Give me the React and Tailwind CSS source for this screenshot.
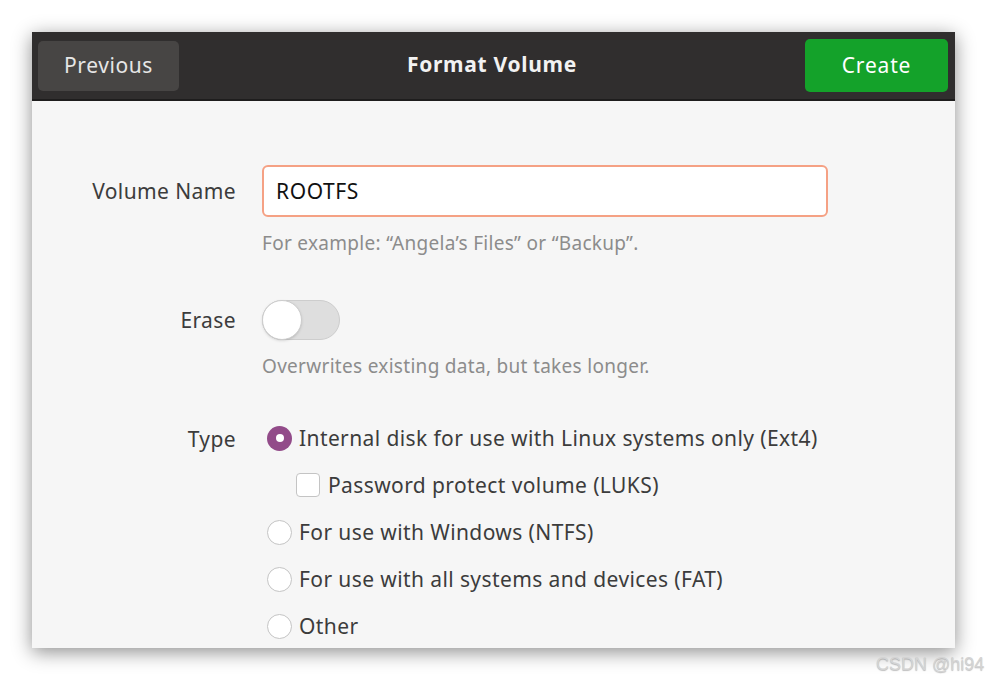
export default function App() {
  const font = { fontFamily: '"Noto Sans", "Open Sans", sans-serif' }
  return (
    <div className="relative h-[681px] w-[987px] bg-white" style={font}>
      <div className="pl-[32px] pt-[32px]">
        <div className="flex h-[616px] w-[923px] flex-col overflow-hidden bg-[#f6f6f6] shadow-[0_4px_18px_rgba(0,0,0,0.45)]">
          <header className="flex h-[69px] shrink-0 items-center justify-between border-b-2 border-[#1e1d1d] bg-[#302e2e] pl-[6px] pr-[7px]">
            <button className="h-[50px] w-[141px] rounded-[5px] bg-[#474544] text-[21px] tracking-[0.6px] text-[#e6e6e6]">Previous</button>
            <h1 className="pb-px text-[21px] font-bold tracking-[0.7px] text-[#f2f2f2]">Format Volume</h1>
            <button className="h-[53px] w-[143px] rounded-[5px] bg-[#14a22a] text-[21px] tracking-[0.8px] text-white">Create</button>
          </header>

          <div className="flex flex-col pt-[64px] text-[21px] tracking-[0.4px] text-[#3c3c3c]">
            <div className="flex items-center">
              <div className="w-[204px] pt-[2px] text-right">Volume Name</div>
              <div className="ml-[26px] flex h-[52px] w-[566px] items-center rounded-[6px] border-2 border-[#f5a184] bg-white px-[12px] pt-[2px] tracking-[0.6px] text-[#111]">ROOTFS</div>
            </div>
            <div className="ml-[230px] mt-[14px] text-[19px] leading-[24px] tracking-[0.3px] text-[#8c8c8c]">For example: “Angela’s Files” or “Backup”.</div>

            <div className="mt-[45px] flex items-center">
              <div className="w-[204px] pt-[2px] text-right">Erase</div>
              <div className="ml-[26px] flex h-[40px] w-[78px] items-center rounded-full border border-[#cdcdcd] bg-[#dedede]">
                <div className="h-[40px] w-[40px] -ml-px rounded-full border border-[#cdcdcd] bg-white shadow-sm" />
              </div>
            </div>
            <div className="ml-[230px] mt-[14px] text-[19px] leading-[24px] tracking-[0.3px] text-[#8c8c8c]">Overwrites existing data, but takes longer.</div>

            <div className="mt-[47px] flex items-start">
              <div className="w-[204px] pt-[1px] text-right leading-[26px]">Type</div>
              <div className="ml-[31px] flex flex-col gap-[21px] leading-[26px]">
                <div className="flex items-center gap-[7px]">
                  <span className="flex h-[25px] w-[25px] items-center justify-center rounded-full bg-[#924b89]">
                    <span className="h-[8px] w-[8px] rounded-full bg-white" />
                  </span>
                  Internal disk for use with Linux systems only (Ext4)
                </div>
                <div className="ml-[29px] flex items-center gap-[8px]">
                  <span className="h-[24px] w-[24px] rounded-[4px] border border-[#c4c4c4] bg-white" />
                  Password protect volume (LUKS)
                </div>
                <div className="flex items-center gap-[7px]">
                  <span className="h-[25px] w-[25px] rounded-full border border-[#c4c4c4] bg-white" />
                  For use with Windows (NTFS)
                </div>
                <div className="flex items-center gap-[7px]">
                  <span className="h-[25px] w-[25px] rounded-full border border-[#c4c4c4] bg-white" />
                  For use with all systems and devices (FAT)
                </div>
                <div className="flex items-center gap-[7px]">
                  <span className="h-[25px] w-[25px] rounded-full border border-[#c4c4c4] bg-white" />
                  Other
                </div>
              </div>
            </div>
          </div>
        </div>
      </div>
      <div
        className="absolute left-[876px] top-[651px] text-[18px] text-[#d4d4d4] [text-shadow:0_1px_1px_rgba(0,0,0,0.25)]"
        style={{ fontFamily: '"Liberation Sans", Arial, sans-serif' }}
      >
        CSDN @hi94
      </div>
    </div>
  )
}
